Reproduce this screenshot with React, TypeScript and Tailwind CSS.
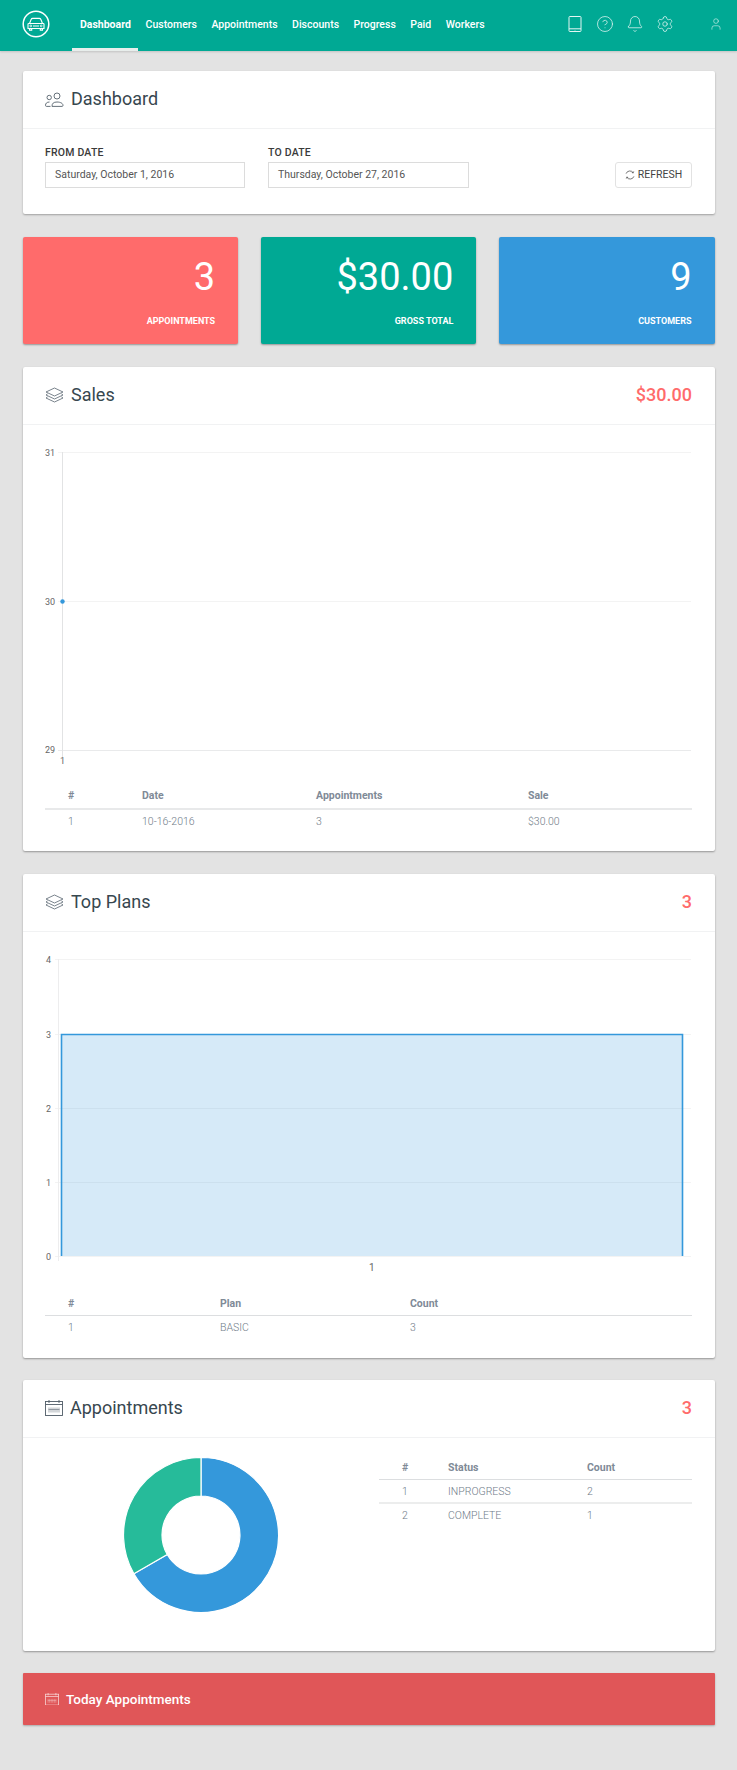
import { Bell, CircleHelp, Settings, User, type LucideIcon } from "lucide-react";

const NAV = ["Dashboard", "Customers", "Appointments", "Discounts", "Progress", "Paid", "Workers"];
const NAV_ICONS: LucideIcon[] = [CircleHelp, Bell, Settings];

function CarLogo() {
    return (
        <svg width="28" height="28" viewBox="0 0 28 28" fill="none" stroke="white" className="shrink-0 mb-[3px]">
            <circle cx="14" cy="14" r="12.8" strokeWidth="1.5" />
            <path d="M7.5 13.5l1.6-4c.3-.7.9-1.1 1.6-1.1h6.6c.7 0 1.3.4 1.6 1.1l1.6 4M6.8 13.5h14.4c.5 0 .8.4.8.8v4.2H6v-4.2c0-.4.3-.8.8-.8zM7.5 18.5v1.6h2.2v-1.6M18.3 18.5v1.6h2.2v-1.6M11 16h6" strokeWidth="1.1" />
            <circle cx="8.8" cy="15.9" r=".9" strokeWidth=".8" />
            <circle cx="19.2" cy="15.9" r=".9" strokeWidth=".8" />
        </svg>
    );
}

function TabletIcon() {
    return (
        <svg width="18" height="18" viewBox="0 0 18 18" fill="none" stroke="currentColor" strokeWidth="1">
            <rect x="3" y="1.5" width="12" height="15" rx="0.8" />
            <path d="M3 13.8h12M9 15v.4" />
        </svg>
    );
}

function UsersIcon() {
    return (
        <svg width="19" height="15" viewBox="0 0 19 15" fill="none" stroke="#56626c" strokeWidth="0.9" className="shrink-0">
            <circle cx="12" cy="4" r="3" />
            <path d="M7 14.4c0-3 1.5-4.4 5-4.4s6 1.4 6 3.4c0 .6-.4 1-1 1z" />
            <circle cx="4.2" cy="5.5" r="2.2" />
            <path d="M5.5 14.4H1.5c-.6 0-1-.4-1-1 0-2 1.3-3.4 4-3.4" />
        </svg>
    );
}

function LayersIcon() {
    return (
        <svg width="19" height="16" viewBox="0 0 19 16" fill="none" stroke="#6b7680" strokeWidth="0.9" className="shrink-0">
            <path d="M9.5 1L18 5l-8.5 4L1 5z" />
            <path d="M2.6 6.9L1 8l8.5 4L18 8l-1.6-1.1" />
            <path d="M2.6 9.9L1 11l8.5 4L18 11l-1.6-1.1" />
        </svg>
    );
}

function CalendarIcon({ color = "#4f5b66", small }: { color?: string; small?: boolean }) {
    return (
        <svg width={small ? 14 : 18} height={small ? 12.5 : 16} viewBox="0 0 18 16" fill="none" stroke={color} strokeWidth={small ? 1 : 0.9} className="shrink-0">
            <rect x="0.5" y="1.5" width="17" height="14" />
            <path d="M.5 4.5h17M4 0v3M14 0v3" />
            <path d="M4 7.5v5M6 7.5v5M8 7.5v5M10 7.5v5M12 7.5v5M14 7.5v5M3.5 9.5h11" strokeWidth="0.5" />
        </svg>
    );
}

function RefreshIcon() {
    return (
        <svg width="10" height="10" viewBox="0 0 11 11" fill="none" stroke="#444" strokeWidth="0.8" className="shrink-0">
            <path d="M1.2 4A4.4 4.4 0 0 1 9 3M9.8 7A4.4 4.4 0 0 1 2 8" />
            <path d="M9.6 1.6L9 3.2 7.5 2.8M1.4 9.4L2 7.8l1.5.4" />
        </svg>
    );
}

function Card({ icon, title, value, children }: { icon: React.ReactNode; title: string; value?: string; children: React.ReactNode }) {
    return (
        <section className="bg-white rounded-[2px] shadow-[0_1px_2px_rgba(0,0,0,0.35)]">
            <header className="h-[58px] border-b border-[#f1f2f3] px-[22.5px] pb-[1px] flex items-center">
                {icon}
                <h2 className="ml-[7px] text-[18px] leading-none text-[#37474f]">{title}</h2>
                {value && <span className="ml-auto text-[18px] leading-none font-medium text-[#ff6b6b]">{value}</span>}
            </header>
            {children}
        </section>
    );
}

function DataTable({ cols, head, rows, thick }: { cols: string; head: string[]; rows: string[][]; thick?: boolean }) {
    return (
        <div className="text-[10.5px]">
            <div className={`grid ${cols} items-center font-bold text-[#7f8a97] ${thick ? "h-[25px] pb-[1px] border-b-[2px] border-[#e8e9ea]" : "h-[24px] pt-[1px] border-b border-[#dcdee0]"}`}>
                {head.map((h, i) => (
                    <div key={h} className={i === 0 ? "pl-[23px]" : ""}>{h}</div>
                ))}
            </div>
            {rows.map((r, ri) => (
                <div key={ri} className={`grid ${cols} items-center font-light text-[#6f7b88] pt-[1px] ${ri < rows.length - 1 ? "h-[24px] border-b-[2px] border-[#eceded]" : "h-[22px]"}`}>
                    {r.map((c, i) => (
                        <div key={i} className={i === 0 ? "pl-[23px]" : ""}>{c}</div>
                    ))}
                </div>
            ))}
        </div>
    );
}

function SalesChart() {
    return (
        <svg width="647" height="360" className="block" fontFamily="Roboto, sans-serif" fontSize="9" fill="#666">
            {[27, 176, 325].map((y) => (
                <line key={y} x1="13" x2="646" y1={y + 0.5} y2={y + 0.5} stroke={y === 325 ? "#e9eaeb" : "#f3f3f3"} />
            ))}
            <line x1="17.5" x2="17.5" y1="27" y2="332" stroke="#e2e3e4" />
            <text x="0" y="30.5">31</text>
            <text x="0" y="179.5">30</text>
            <text x="0" y="327.5">29</text>
            <text x="15" y="339">1</text>
            <circle cx="17.5" cy="176.5" r="2.2" fill="#3498db" />
        </svg>
    );
}

function PlansChart() {
    const ys = [27, 102, 176, 250, 324];
    return (
        <svg width="647" height="360" className="block" fontFamily="Roboto, sans-serif" fontSize="9" fill="#666">
            {ys.map((y, i) => (
                <g key={y}>
                    <line x1="10" x2="646" y1={y + 0.5} y2={y + 0.5} stroke="#f3f3f3" />
                    <text x="1" y={y + 3.5}>{4 - i}</text>
                </g>
            ))}
            <line x1="13.5" x2="13.5" y1="27" y2="329" stroke="#ededee" />
            <rect x="16" y="102" width="622" height="222" fill="#3498db" fillOpacity="0.2" />
            <path d="M16.5 324V102.5H637.5V324" fill="none" stroke="#3498db" strokeWidth="1.6" />
            <text x="324" y="338.5" fontSize="10">1</text>
        </svg>
    );
}

function Donut() {
    return (
        <svg width="156" height="156" viewBox="-78 -78 156 156" className="block">
            <path d="M0 -77.5A77.5 77.5 0 1 1 -67.1 38.75L-33.8 19.5A39 39 0 1 0 0 -39Z" fill="#3498db" stroke="white" strokeWidth="1.2" />
            <path d="M-67.1 38.75A77.5 77.5 0 0 1 0 -77.5V-39A39 39 0 0 0 -33.8 19.5Z" fill="#26bb9a" stroke="white" strokeWidth="1.2" />
        </svg>
    );
}

function Stat({ value, label, bg }: { value: string; label: string; bg: string }) {
    return (
        <div className={`${bg} h-[107px] rounded-[2px] shadow-[0_1px_2px_rgba(0,0,0,0.35)] pr-[23px] pt-[15px] text-right text-white`}>
            <div className="text-[38px] leading-[50px]">{value}</div>
            <div className="mt-[13px] text-[9px] leading-[12px] font-bold">{label}</div>
        </div>
    );
}

export default function App() {
    return (
        <div className="min-h-[1770px] bg-[#e3e3e3] font-['Roboto',sans-serif]">
            <nav className="h-[51px] bg-[#00a994] flex items-center pl-[22px] pr-[14px] text-white shadow-[0_1px_2px_rgba(0,0,0,0.15)]">
                <CarLogo />
                <div className="ml-[22px] flex h-full">
                    {NAV.map((n, i) => (
                        <a key={n} className={`flex items-center pt-[2px] text-[10.5px] border-b-[3px] ${i === 0 ? "pl-[8px] pr-[7.5px] border-[#e8eeec] font-bold" : "px-[7.25px] border-transparent font-medium"}`}>
                            {n}
                        </a>
                    ))}
                </div>
                <div className="ml-auto mb-[3px] flex items-center gap-[12px] text-[#e3f6f3]">
                    <TabletIcon />
                    {NAV_ICONS.map((Icon, i) => (
                        <Icon key={i} size={18} strokeWidth={1} />
                    ))}
                    <User size={14} strokeWidth={1} className="ml-[23px]" />
                </div>
            </nav>

            <main className="px-[22.5px] pt-[20px] flex flex-col gap-[22px]">
                <section className="h-[143px] bg-white rounded-[2px] shadow-[0_1px_2px_rgba(0,0,0,0.3)]">
                    <header className="h-[58px] border-b border-[#f1f2f3] px-[22.5px] pb-[1px] flex items-center">
                        <UsersIcon />
                        <h1 className="ml-[7px] text-[18px] leading-none text-[#37474f]">Dashboard</h1>
                    </header>
                    <div className="px-[22.5px] pt-[15px] flex items-end">
                        <label className="w-[200px] mr-[23px] block">
                            <div className="text-[10.5px] leading-[18px] font-medium text-[#3a3a3a] tracking-[0.2px]">FROM DATE</div>
                            <div className="h-[26px] border-[1.5px] border-[#dcdcdc] pl-[9px] flex items-center text-[10.5px] text-[#555]">Saturday, October 1, 2016</div>
                        </label>
                        <label className="w-[201px] block">
                            <div className="text-[10.5px] leading-[18px] font-medium text-[#3a3a3a] tracking-[0.2px]">TO DATE</div>
                            <div className="h-[26px] border-[1.5px] border-[#dcdcdc] pl-[9px] flex items-center text-[10.5px] text-[#555]">Thursday, October 27, 2016</div>
                        </label>
                        <button className="ml-auto h-[26px] w-[77px] rounded-[3px] border-[1.5px] border-[#e2e2e2] flex items-center justify-center gap-[3px] text-[10.5px] text-[#444]">
                            <RefreshIcon />
                            REFRESH
                        </button>
                    </div>
                </section>

                <div className="grid grid-cols-3 gap-[22.5px] mt-[1px]">
                    <Stat value="3" label="APPOINTMENTS" bg="bg-[#ff6b6b]" />
                    <Stat value="$30.00" label="GROSS TOTAL" bg="bg-[#00a994]" />
                    <Stat value="9" label="CUSTOMERS" bg="bg-[#3498db]" />
                </div>

                <div className="mt-[1px]">
                    <Card icon={<LayersIcon />} title="Sales" value="$30.00">
                        <div className="px-[22.5px] pb-[19px]">
                            <SalesChart />
                            <DataTable
                                cols="grid-cols-[97px_174px_212px_1fr]"
                                head={["#", "Date", "Appointments", "Sale"]}
                                rows={[["1", "10-16-2016", "3", "$30.00"]]}
                                thick
                            />
                        </div>
                    </Card>
                </div>

                <div className="mt-[1px]">
                    <Card icon={<LayersIcon />} title="Top Plans" value="3">
                        <div className="px-[22.5px] pb-[20px]">
                            <PlansChart />
                            <DataTable
                                cols="grid-cols-[175px_190px_1fr]"
                                head={["#", "Plan", "Count"]}
                                rows={[["1", "BASIC", "3"]]}
                            />
                        </div>
                    </Card>
                </div>

                <Card icon={<CalendarIcon />} title="Appointments" value="3">
                    <div className="h-[213px] pl-[100.5px] pr-[22.5px] pt-[19px] flex items-start">
                        <Donut />
                        <div className="ml-auto w-[313px] mt-[-1px]">
                            <DataTable
                                cols="grid-cols-[69px_139px_1fr]"
                                head={["#", "Status", "Count"]}
                                rows={[
                                    ["1", "INPROGRESS", "2"],
                                    ["2", "COMPLETE", "1"],
                                ]}
                            />
                        </div>
                    </div>
                </Card>

                <div className="h-[52px] bg-[#e05658] rounded-[1px] shadow-[0_1px_2px_rgba(0,0,0,0.25)] px-[22.5px] flex items-center gap-[7px] text-white text-[13.5px] font-medium">
                    <CalendarIcon color="#f8d5d5" small />
                    Today Appointments
                </div>
            </main>
        </div>
    );
}
